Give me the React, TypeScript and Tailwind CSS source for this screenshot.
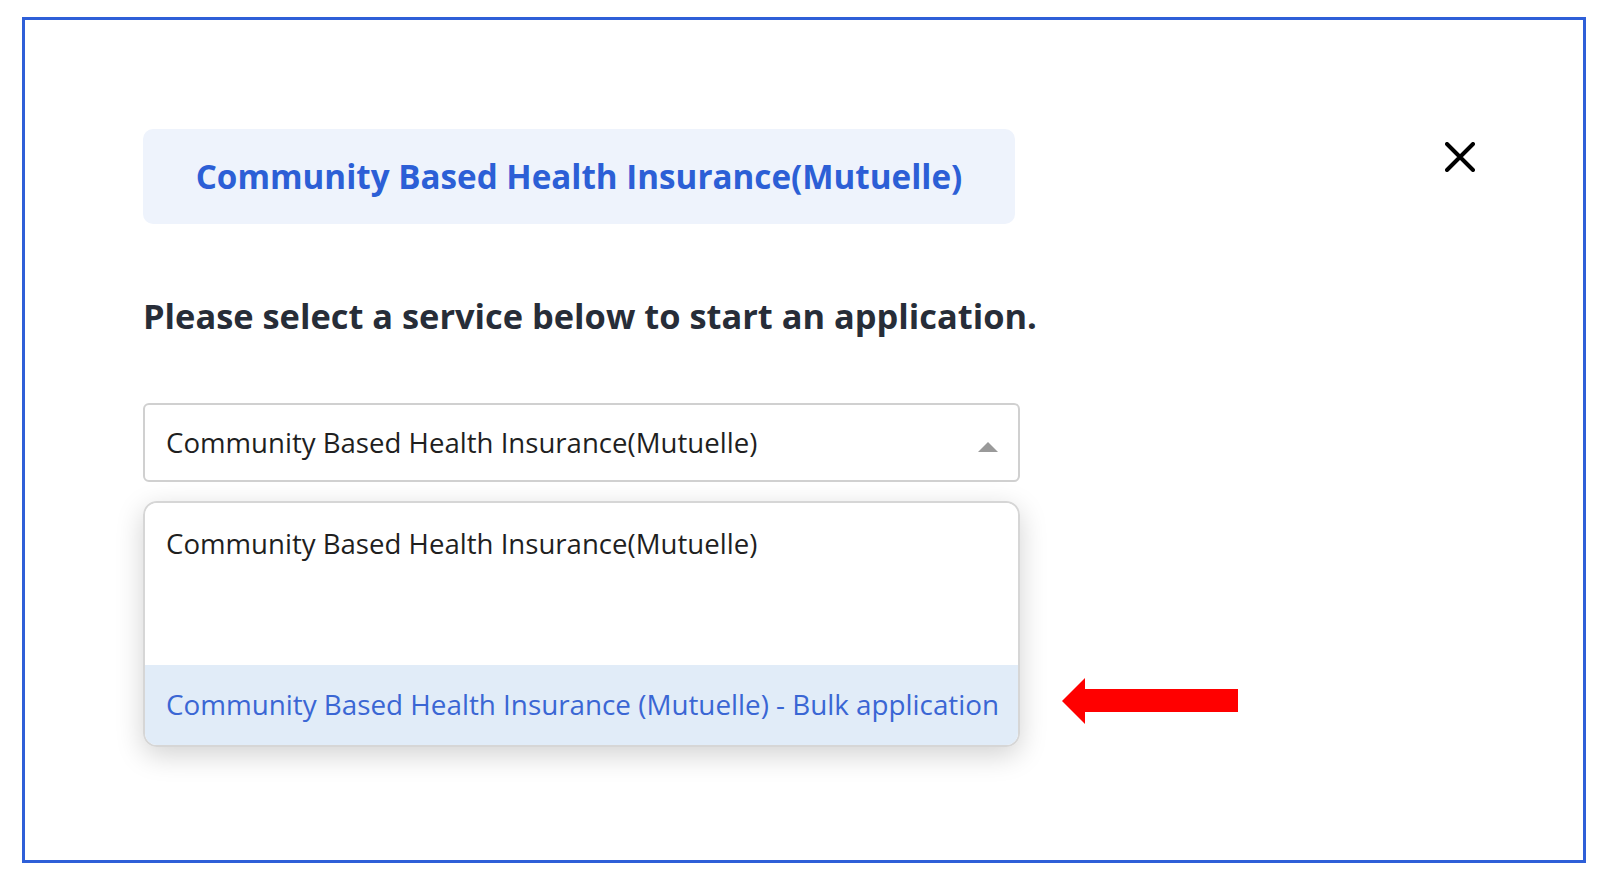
import React from "react";

export default function App() {
  return (
    <div className="w-[1600px] h-[876px] bg-white pt-[17px] pl-[22px] overflow-hidden" style={{ fontFamily: "'Open Sans', 'Noto Sans', sans-serif" }}>
      <div className="w-[1564px] h-[846px] border-[3px] border-[#2e5fd8] pl-[118px] pt-[109px] flex flex-col">
        <div className="flex items-start">
          <div className="w-[872px] h-[95px] rounded-[10px] bg-[#eef3fc] flex items-center justify-center">
            <span className="text-[33.2px] font-bold text-[#2c5fd6] leading-none">Community Based Health Insurance(Mutuelle)</span>
          </div>
          <svg width="30" height="30" viewBox="0 0 30 30" className="ml-[430px] mt-[13px]">
            <path d="M2 2 L28 28 M28 2 L2 28" stroke="#000" strokeWidth="4" strokeLinecap="round" />
          </svg>
        </div>
        <div className="mt-[72px] h-[40px] flex items-center text-[34.4px] font-bold text-[#272d38] leading-none">
          Please select a service below to start an application.
        </div>
        <div className="mt-[67px] w-[877px] h-[79px] border-2 border-[#d0d0d0] rounded-[6px] flex items-center justify-between pl-[21px] pr-[20px]">
          <span className="text-[27.6px] text-[#1f1f1f] leading-none">Community Based Health Insurance(Mutuelle)</span>
          <svg width="20" height="10" viewBox="0 0 20 10" className="mt-[8px]">
            <polygon points="10,0 20,10 0,10" fill="#9a9a9a" />
          </svg>
        </div>
        <div className="mt-[19px] flex items-start">
          <div className="w-[877px] h-[246px] border-2 border-[#d6d6d6] rounded-[14px] overflow-hidden shadow-[0_8px_28px_rgba(0,0,0,0.18)] flex flex-col">
            <div className="h-[162px] bg-white pl-[21px] pt-[23px]">
              <span className="text-[27.6px] text-[#1f1f1f] leading-[34px]">Community Based Health Insurance(Mutuelle)</span>
            </div>
            <div className="flex-1 bg-[#e1ecf8] pl-[21px] flex items-center">
              <span className="text-[27.8px] text-[#3a66d4] leading-none">Community Based Health Insurance (Mutuelle) - Bulk application</span>
            </div>
          </div>
          <svg width="176" height="46" viewBox="0 0 176 46" className="ml-[42px] mt-[177px]">
            <polygon points="0,23 23,0 23,11 176,11 176,34 23,34 23,46" fill="#ff0000" />
          </svg>
        </div>
      </div>
    </div>
  );
}
